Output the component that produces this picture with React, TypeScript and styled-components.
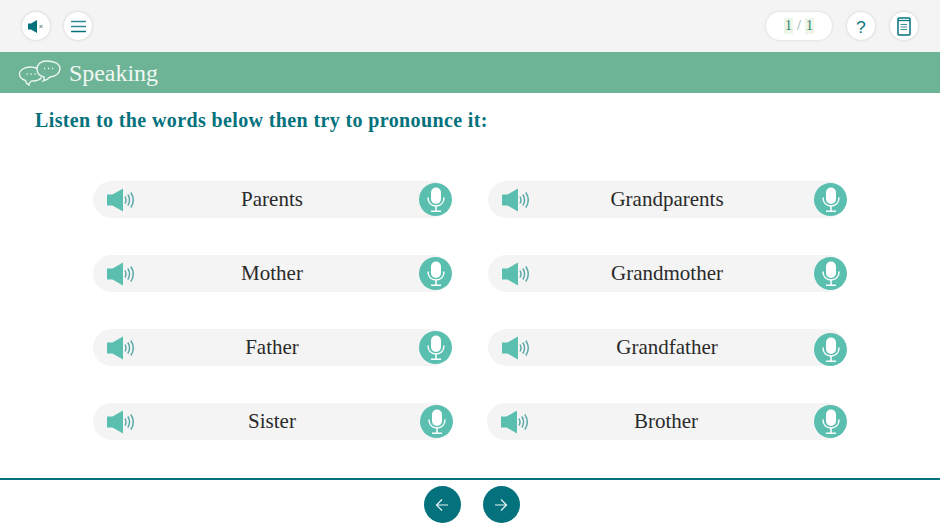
import React from 'react';
import styled, { createGlobalStyle } from 'styled-components';

const TEAL = '#04727d';
const MINT = '#5bbfb0';

const GlobalStyle = createGlobalStyle`
  html, body {
    margin: 0;
    padding: 0;
    background: #fff;
  }
  body {
    font-family: 'Liberation Serif', 'Times New Roman', serif;
  }
`;

function MuteIcon() {
  return (
    <svg width="16" height="13" viewBox="0 0 16 13">
      <path d="M0 3.500h3L9 0v13L3 9.500H0z" fill={TEAL} />
      <path d="M11.500 5l3 3M14.500 5l-3 3" stroke="#5d7f86" strokeWidth="1" fill="none" />
    </svg>
  );
}

function MenuIcon() {
  return (
    <svg width="15" height="13" viewBox="0 0 15 13">
      <path d="M.5 1.500h14M.5 6.500h14" stroke="#2f8a93" strokeWidth="1.300" strokeLinecap="round" fill="none" />
      <path d="M.5 11.500h14" stroke={TEAL} strokeWidth="1.500" strokeLinecap="round" fill="none" />
    </svg>
  );
}

function BookIcon() {
  return (
    <svg width="14" height="19" viewBox="0 0 14 19">
      <rect x="1" y="1" width="12" height="17" rx="1" stroke={TEAL} strokeWidth="1.500" fill="#fff" />
      <path d="M1 3.500h12" stroke={TEAL} strokeWidth="1.200" />
      <path d="M3.500 7.500h6.500M3.500 10h6.500M3.500 12.500h6.500" stroke="#3f8f98" strokeWidth="1.200" />
    </svg>
  );
}

function ChatIcon() {
  return (
    <svg width="44" height="26" viewBox="0 0 44 26" fill="none" stroke="#e9f5f0" strokeWidth="1.400">
      <path d="M19 8.500c-2-1-4-1.500-6.500-1.500C6.500 7 1.500 10 1.500 14c0 3 2.500 5.500 6 6.500 0 1.500 1 3 3.500 4.500 0-1.500 1-3 2.500-4 4 .3 8-1 10-3.500" />
      <path d="M28.500 1C22.500 1 19 4.500 19 9c0 4 3 7 7 8 .3 1.500.5 2.700-.5 3.800 3-.8 5-2 6.500-3.800 6-.3 10-4 10-8.500C42 3.500 35.500 1 28.500 1z" />
      <path d="M8.500 14h1.200M12.500 14h1.200M16.500 14h1.200M26 8.500h1.200M30 8.500h1.200M34 8.500h1.200" strokeWidth="1.500" />
    </svg>
  );
}

function SpeakerIcon() {
  return (
    <svg width="28" height="24" viewBox="0 0 28 24">
      <path d="M0 6.500h5.500L16 .5v23L5.500 17.500H0z" fill={MINT} />
      <path d="M18 8.500q2 3.500 0 7M20.800 6.500q3.500 5.500 0 11M23.800 4.500q5 7.500 0 15" stroke="#5aa9a8" strokeWidth="1.500" fill="none" />
    </svg>
  );
}

function MicIcon() {
  return (
    <svg width="18" height="25" viewBox="0 0 18 25" fill="none">
      <rect x="4" y="0.500" width="10" height="16.500" rx="5" fill="#fff" />
      <path d="M1 10.500c0 5.500 3.500 8.500 8 8.500s8-3 8-8.500" stroke="#fff" strokeWidth="1.500" />
      <path d="M9 19v5M4 24.200h10" stroke="#fff" strokeWidth="1.500" />
    </svg>
  );
}

function ArrowIcon({ back }: { back?: boolean }) {
  return (
    <svg width="14" height="14" viewBox="0 0 14 14" fill="none" stroke="#e8f3f4" strokeWidth="1.200">
      {back ? <path d="M13 7H1.500M7 1.500L1.500 7 7 12.500" /> : <path d="M1 7h11.500M7 1.500L12.500 7 7 12.500" />}
    </svg>
  );
}

const words: { label: string; shiftX?: number; micY?: number; micX?: number }[] = [
  { label: 'Parents' },
  { label: 'Grandparents' },
  { label: 'Mother' },
  { label: 'Grandmother' },
  { label: 'Father' },
  { label: 'Grandfather', micY: 2 },
  { label: 'Sister', micX: 1 },
  { label: 'Brother', shiftX: -1, micX: 1 },
];

export default function App() {
  return (
    <Page>
      <GlobalStyle />
      <TopBar>
        <ToolGroup>
          <RoundButton><MuteIcon /></RoundButton>
          <RoundButton><MenuIcon /></RoundButton>
        </ToolGroup>
        <RightGroup>
          <PageCounter>
            <CounterDigit>1</CounterDigit>
            <CounterSlash>/</CounterSlash>
            <CounterDigit>1</CounterDigit>
          </PageCounter>
          <RoundButton><HelpMark>?</HelpMark></RoundButton>
          <RoundButton><BookIcon /></RoundButton>
        </RightGroup>
      </TopBar>
      <SectionBar>
        <ChatIcon />
        <SectionTitle>Speaking</SectionTitle>
      </SectionBar>
      <Instruction>Listen to the words below then try to pronounce it:</Instruction>
      <WordGrid>
        {words.map((w) => (
          <WordPill key={w.label} $shiftX={w.shiftX ?? 0}>
            <SpeakerSlot><SpeakerIcon /></SpeakerSlot>
            <WordLabel>{w.label}</WordLabel>
            <MicButton $x={w.micX ?? 0} $y={w.micY ?? 0}><MicIcon /></MicButton>
          </WordPill>
        ))}
      </WordGrid>
      <Footer>
        <NavButton><ArrowIcon back /></NavButton>
        <NavButton><ArrowIcon /></NavButton>
      </Footer>
    </Page>
  );
}

const Page = styled.div`
  width: 940px;
  height: 528px;
  display: flex;
  flex-direction: column;
  overflow: hidden;
  background: #fff;
`;

const TopBar = styled.div`
  height: 52px;
  flex: none;
  box-sizing: border-box;
  display: flex;
  align-items: center;
  justify-content: space-between;
  padding: 0 22px;
  background: #f4f4f4;
`;

const ToolGroup = styled.div`
  display: flex;
  align-items: center;
  gap: 14px;
`;

const RightGroup = styled.div`
  display: flex;
  align-items: center;
  gap: 15px;
`;

const RoundButton = styled.div`
  width: 28px;
  height: 28px;
  border-radius: 50%;
  background: #fff;
  box-shadow: 0 0 3px rgba(0, 0, 0, 0.18);
  display: flex;
  align-items: center;
  justify-content: center;
`;

const PageCounter = styled.div`
  width: 66px;
  height: 28px;
  border-radius: 14px;
  background: #fff;
  box-shadow: 0 0 3px rgba(0, 0, 0, 0.14);
  display: flex;
  align-items: center;
  justify-content: center;
  gap: 4px;
  font-size: 14px;
  color: ${TEAL};
`;

const CounterDigit = styled.span`
  background: #eef6e8;
  padding: 0 1px;
  color: #2f7f72;
`;

const CounterSlash = styled.span`
  color: #7d9ea3;
`;

const HelpMark = styled.span`
  font-family: 'Liberation Sans', Arial, sans-serif;
  font-size: 17px;
  color: ${TEAL};
  padding-top: 3px;
`;

const SectionBar = styled.div`
  height: 41px;
  flex: none;
  display: flex;
  align-items: center;
  gap: 7px;
  padding-left: 18px;
  background: #6db396;
`;

const SectionTitle = styled.h1`
  margin: 0;
  padding-top: 2px;
  font-size: 24px;
  font-weight: 400;
  letter-spacing: -0.05px;
  color: #f1f8f4;
`;

const Instruction = styled.p`
  margin: 15px 0 0 35px;
  font-size: 20px;
  line-height: 25px;
  font-weight: 700;
  letter-spacing: 0.38px;
  color: ${TEAL};
`;

const WordGrid = styled.div`
  display: grid;
  grid-template-columns: 358px 358px;
  grid-auto-rows: 37px;
  column-gap: 37px;
  row-gap: 37px;
  margin: 48px 0 0 93px;
`;

const WordPill = styled.div<{ $shiftX: number }>`
  height: 37px;
  border-radius: 19px;
  background: #f4f4f4;
  display: flex;
  align-items: center;
  transform: translateX(${(p) => p.$shiftX}px);
`;

const SpeakerSlot = styled.div`
  width: 48px;
  padding-left: 14px;
  box-sizing: border-box;
  display: flex;
  align-items: center;
`;

const WordLabel = styled.span`
  flex: 1;
  text-align: center;
  font-size: 21px;
  color: #2a2a2a;
`;

const MicButton = styled.div<{ $x: number; $y: number }>`
  width: 33px;
  height: 33px;
  margin-right: -1px;
  margin-left: 16px;
  border-radius: 50%;
  background: ${MINT};
  display: flex;
  align-items: center;
  justify-content: center;
  transform: translate(${(p) => p.$x}px, ${(p) => p.$y}px);
`;

const Footer = styled.div`
  margin-top: auto;
  height: 50px;
  flex: none;
  border-top: 2px solid ${TEAL};
  box-sizing: border-box;
  display: flex;
  justify-content: center;
  align-items: center;
  gap: 22px;
  padding: 1px 0 0 3px;
  background: #fff;
`;

const NavButton = styled.div`
  width: 37px;
  height: 37px;
  border-radius: 50%;
  background: ${TEAL};
  display: flex;
  align-items: center;
  justify-content: center;
`;
